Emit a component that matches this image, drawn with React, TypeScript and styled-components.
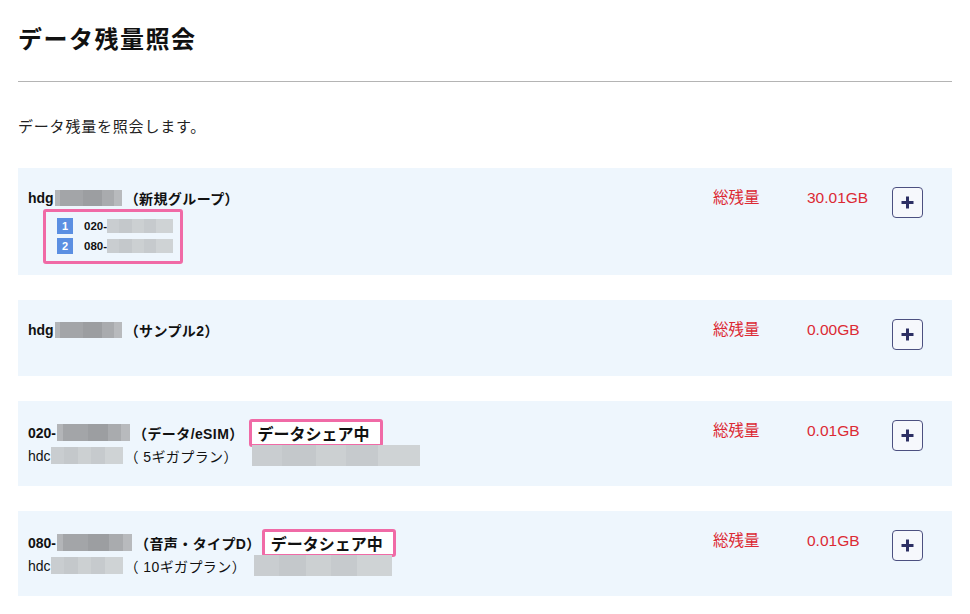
import React from "react";
import styled, { createGlobalStyle } from "styled-components";

const Global = createGlobalStyle`
  html, body { margin: 0; padding: 0; background: #ffffff; }
  body {
    font-family: "Liberation Sans", "Noto Sans CJK JP", sans-serif;
    color: #111;
  }
`;

const Page = styled.div`
  padding: 0 18px 20px;
`;

const Title = styled.h1`
  margin: 0;
  padding-top: 24px;
  font-size: 24px;
  line-height: 32px;
  font-weight: 700;
  letter-spacing: 1.5px;
`;

const Rule = styled.hr`
  margin: 25px 0 0;
  border: none;
  border-top: 1.5px solid #b4b4b4;
`;

const Lead = styled.p`
  margin: 34px 0 0;
  font-size: 15px;
  line-height: 22px;
  letter-spacing: 0.8px;
  color: #222;
`;

const List = styled.div`
  margin-top: 30px;
  display: flex;
  flex-direction: column;
  gap: 25px;
`;

const Card = styled.section`
  background: #eef6fd;
  padding: 20px 29px 19px 10px;
  display: flex;
  align-items: flex-start;
`;

const Left = styled.div`
  flex: 1;
  min-width: 0;
`;

const Line = styled.div<{ $bold?: boolean; $h?: number }>`
  display: flex;
  align-items: center;
  height: ${(p) => p.$h ?? 20}px;
  font-size: 14px;
  font-weight: ${(p) => (p.$bold ? 700 : 400)};
  white-space: nowrap;
  color: #111;
`;

const Paren = styled.span<{ $ml?: number }>`
  margin-left: ${(p) => p.$ml ?? 3}px;
  letter-spacing: 0.4px;
`;

const Blur = styled.span<{ $w: number; $h: number; $ml?: number; $tone?: "dark" | "light" }>`
  display: inline-block;
  width: ${(p) => p.$w}px;
  height: ${(p) => p.$h}px;
  margin-left: ${(p) => p.$ml ?? 0}px;
  background: ${(p) =>
    p.$tone === "light"
      ? "linear-gradient(90deg, #c9cdd0 0 18%, #c4c8cb 18% 38%, #ccd0d2 38% 56%, #c6cacd 56% 75%, #cfd3d5 75% 100%)"
      : "linear-gradient(90deg, #b3b5b8 0 8%, #a3a5a8 8% 42%, #9c9ea1 42% 70%, #a9abae 70% 88%, #b8babd 88% 100%)"};
`;

const Share = styled.span<{ $ml?: number }>`
  display: inline-flex;
  align-items: center;
  height: 28px;
  box-sizing: border-box;
  margin-left: ${(p) => p.$ml ?? 5}px;
  padding: 0 10px 0 6px;
  border: 3px solid #f06aa6;
  border-radius: 3px;
  background: #fff;
  font-size: 16px;
  font-weight: 700;
  color: #111;
`;

const Members = styled.div`
  position: relative;
  margin: 8px 0 0 29px;
  width: fit-content;
`;

const Highlight = styled.div`
  position: absolute;
  left: -14px;
  top: -7px;
  width: 140px;
  height: 55px;
  box-sizing: border-box;
  border: 3px solid #f06aa6;
  border-radius: 3px;
  pointer-events: none;
`;

const Member = styled.div`
  display: flex;
  align-items: center;
  height: 20px;
  font-size: 11.5px;
  font-weight: 700;
`;

const Num = styled.span`
  display: inline-flex;
  align-items: center;
  justify-content: center;
  width: 16px;
  height: 16px;
  margin-right: 11px;
  background: #5b8fe2;
  color: #fff;
  font-size: 11px;
  font-weight: 700;
`;

const Right = styled.div`
  display: grid;
  grid-template-columns: 94px 85px 31px;
  align-items: start;
  height: 37px;
`;

const Label = styled.span`
  font-size: 15.5px;
  line-height: 20px;
  color: #dc2a34;
`;

const Amount = styled.span`
  font-size: 15.5px;
  line-height: 20px;
  color: #dc2a34;
`;

const PlusBtn = styled.button`
  width: 31px;
  height: 31px;
  margin-top: -1px;
  padding: 0;
  display: flex;
  align-items: center;
  justify-content: center;
  box-sizing: border-box;
  background: #f6f8fc;
  border: 1.5px solid #4c5080;
  border-radius: 4px;
  cursor: pointer;
`;

const Plus = () => (
  <svg width="15" height="15" viewBox="0 0 15 15">
    <path d="M7.5 1.5v12M1.5 7.5h12" stroke="#2d3064" strokeWidth="3" />
  </svg>
);

const Total: React.FC<{ amount: string }> = ({ amount }) => (
  <Right>
    <Label>総残量</Label>
    <Amount>{amount}</Amount>
    <PlusBtn aria-label="詳細">
      <Plus />
    </PlusBtn>
  </Right>
);

export default function App() {
  return (
    <Page>
      <Global />
      <Title>データ残量照会</Title>
      <Rule />
      <Lead>データ残量を照会します。</Lead>
      <List>
        <Card>
          <Left>
            <Line $bold>
              hdg
              <Blur $w={67} $h={16} $ml={1} />
              <Paren>（新規グループ）</Paren>
            </Line>
            <Members>
              <Highlight />
              <Member>
                <Num>1</Num>020-
                <Blur $w={66} $h={14} $tone="light" />
              </Member>
              <Member>
                <Num>2</Num>080-
                <Blur $w={66} $h={14} $tone="light" />
              </Member>
            </Members>
          </Left>
          <Total amount="30.01GB" />
        </Card>

        <Card>
          <Left>
            <Line $bold>
              hdg
              <Blur $w={67} $h={16} $ml={1} />
              <Paren>（サンプル2）</Paren>
            </Line>
          </Left>
          <Total amount="0.00GB" />
        </Card>

        <Card>
          <Left>
            <Line $bold $h={23}>
              020-
              <Blur $w={73} $h={17} $ml={1} />
              <Paren $ml={3}>（データ/eSIM）</Paren>
              <Share $ml={5}>データシェア中</Share>
            </Line>
            <Line $h={23}>
              hdc
              <Blur $w={72} $h={17} $tone="light" />
              <Paren $ml={2}>（ 5ギガプラン）</Paren>
              <Blur $w={168} $h={21} $ml={14} $tone="light" />
            </Line>
          </Left>
          <Total amount="0.01GB" />
        </Card>

        <Card>
          <Left>
            <Line $bold $h={23}>
              080-
              <Blur $w={75} $h={17} $ml={1} />
              <Paren $ml={3}>（音声・タイプD）</Paren>
              <Share $ml={1}>データシェア中</Share>
            </Line>
            <Line $h={23}>
              hdc
              <Blur $w={72} $h={17} $tone="light" />
              <Paren $ml={2}>（ 10ギガプラン）</Paren>
              <Blur $w={138} $h={21} $ml={8} $tone="light" />
            </Line>
          </Left>
          <Total amount="0.01GB" />
        </Card>
      </List>
    </Page>
  );
}
